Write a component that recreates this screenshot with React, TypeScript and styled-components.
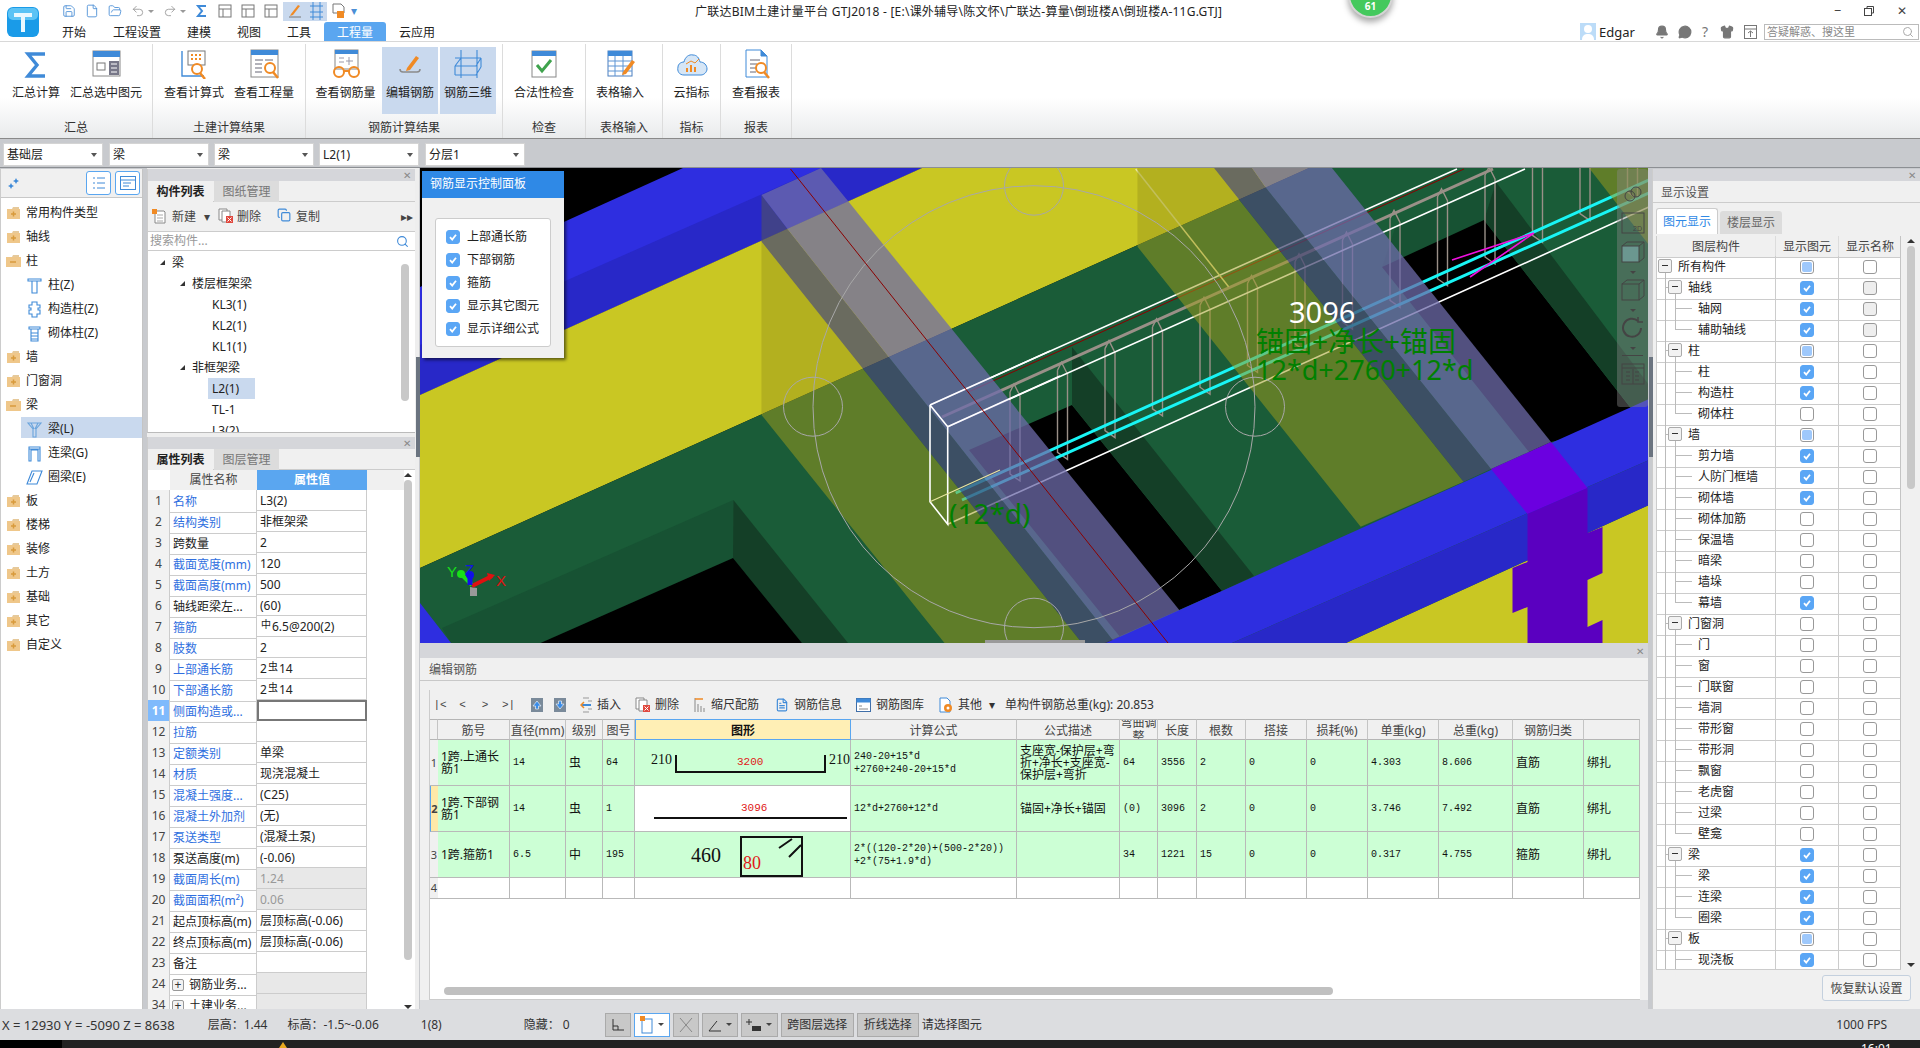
import React from "react";
import styled, { createGlobalStyle } from "styled-components";
import { Save, File, FolderOpen, Undo2, Redo2, Bell, MessageCircle, Shirt, Search, Copy, FileText } from "lucide-react";

const SANS = `"Noto Sans","Noto Sans CJK SC",sans-serif`;
const MONO = `"Liberation Mono","Noto Sans CJK SC",monospace`;

const Global = createGlobalStyle`
  html,body{margin:0;padding:0;background:#c8cace;}
  *{box-sizing:border-box;}
`;

const Page = styled.div`
  width:1920px;height:1048px;overflow:hidden;display:flex;flex-direction:column;position:relative;
  background:#c8cace;font-family:${SANS};font-size:12px;line-height:14px;color:#222;
`;
/* ---------- header ---------- */
const Header = styled.header`
  height:42px;background:#fff;border-bottom:1px solid #d8d8d8;display:grid;
  grid-template-columns:45px 650px 530px 1fr;grid-template-rows:22px 19px;
`;
const LogoCell = styled.div`grid-row:1/3;display:flex;align-items:flex-end;justify-content:center;padding-bottom:4px;`;
const QuickRow = styled.div`display:flex;align-items:center;gap:9px;padding-left:17px;color:#4b8fd6;`;
const QuickHi = styled.div`display:flex;align-items:center;gap:8px;background:#c9d9ee;height:19px;padding:0 4px 0 5px;margin:0 -4px;`;
const MiniCaret = styled.span`width:0;height:0;border-left:3px solid transparent;border-right:3px solid transparent;border-top:3px solid #999;margin-left:-6px;`;
const Title = styled.div`font-size:12px;line-height:23px;white-space:nowrap;color:#222;letter-spacing:.23px;`;
const WinBtns = styled.div`display:flex;justify-content:flex-end;align-items:center;gap:22px;padding-right:13px;color:#444;font-size:12px;`;
const TabsRow = styled.nav`grid-column:2/4;display:flex;align-items:flex-end;padding-left:17px;`;
const Tab = styled.div<{ $on?: boolean; $ml?: number }>`
  height:19px;line-height:21px;padding:0 ${p => (p.$on ? 13 : 0)}px;margin-left:${p => p.$ml ?? 0}px;
  border-radius:${p => (p.$on ? "3px 3px 0 0" : "0")};background:${p => (p.$on ? "#5aa6f0" : "none")};
  color:${p => (p.$on ? "#fff" : "#222")};
`;
const UserRow = styled.div`display:flex;align-items:center;justify-content:flex-end;color:#666;padding-right:1px;height:19px;`;
const UserName = styled.span`margin:0 15px 0 3px;color:#222;font-size:13px;`;
const UserGlyph = styled.span<{ $w: number }>`width:${p => p.$w}px;display:flex;align-items:center;justify-content:center;font-size:14px;color:#777;`;
const HeadSearch = styled.div`
  width:155px;height:16px;border:1px solid #bbb;display:flex;align-items:center;justify-content:space-between;
  padding:0 4px 0 2px;color:#888;font-size:11px;margin-left:4px;
`;
const Badge = styled.div`
  position:absolute;left:1348px;top:-28px;width:45px;height:46px;border-radius:50%;background:#44c95d;
  border:2px solid #d5d5d5;box-shadow:0 4px 6px rgba(0,0,0,.35);color:#fff;font-size:10px;font-weight:700;
  display:flex;align-items:flex-end;justify-content:center;padding-bottom:3px;
`;
/* ---------- ribbon ---------- */
const Ribbon = styled.section`
  height:97px;display:flex;background:linear-gradient(#fff 0,#fff 58%,#e9ebec 100%);border-bottom:1px solid #8a8a8a;
`;
const RGroup = styled.div<{ $w: number }>`
  width:${p => p.$w}px;display:flex;flex-direction:column;margin:2px 0 0;
  border-right:1px solid #dcdcdc;
`;
const RButtons = styled.div<{ $pl?: number; $pr?: number; $center?: boolean }>`
  flex:1;display:flex;gap:0;padding:3px ${p => p.$pr ?? 0}px 0 ${p => p.$pl ?? 0}px;
  justify-content:${p => (p.$center ? "center" : "flex-start")};
`;
const RBtn = styled.div<{ $w: number; $on?: boolean; $ml?: number }>`
  width:${p => p.$w}px;height:67px;margin-left:${p => p.$ml ?? 0}px;background:${p => (p.$on ? "#c9d9ee" : "none")};
  display:flex;flex-direction:column;align-items:center;white-space:nowrap;padding-top:2px;
  svg{height:30px;width:32px;flex:none;}
`;
const RLabel = styled.span`margin-top:7px;line-height:14px;`;
const RGroupName = styled.div`height:20px;line-height:20px;text-align:center;color:#333;`;
/* ---------- combos ---------- */
const ComboBar = styled.div`height:29px;background:#c8cace;display:flex;align-items:flex-start;padding:4px 0 0 3px;border-bottom:1px solid #8c8f93;`;
const Combo = styled.div<{ $ml?: number }>`
  width:100px;height:23px;background:#fff;border:1px solid #d4d4d4;margin-left:${p => p.$ml ?? 0}px;
  display:flex;align-items:center;justify-content:space-between;padding:0 5px 0 3px;
  &::after{content:"";border-left:3px solid transparent;border-right:3px solid transparent;border-top:4px solid #555;}
`;
/* ---------- main ---------- */
const Main = styled.main`height:841px;display:flex;position:relative;`;
const SideHandle = styled.div<{ $x: number }>`position:absolute;left:${p => p.$x}px;top:189px;width:4px;height:100px;background:#6b7480;`;
const LeftNav = styled.aside`width:143px;background:#fff;border-right:1px solid #c4c4c4;border-left:1px solid #ccc;display:flex;flex-direction:column;margin-top:1px;`;
const NavHead = styled.div`height:29px;background:#f0f0f0;border-bottom:1px solid #c8c8c8;display:flex;align-items:center;padding:0 2px 0 6px;gap:4px;margin-bottom:2px;`;
const NavHeadBtn = styled.div`width:25px;height:24px;border:1px solid #5aa6f0;border-radius:3px;background:#fff;display:flex;align-items:center;justify-content:center;`;
const Spacer = styled.div`flex:1;`;
const NavRow = styled.div<{ $sub?: boolean; $on?: boolean }>`
  height:24px;display:flex;align-items:center;gap:5px;white-space:nowrap;padding:2px 0 0 5px;
  margin-left:${p => (p.$sub ? 20 : 0)}px;
  background:${p => (p.$on ? "linear-gradient(transparent 1px,#c9d9ee 1px,#c9d9ee 22px,transparent 22px)" : "none")};
  svg{flex:none;}
`;
const Col2 = styled.div`width:272px;margin-left:4px;padding-right:4px;display:flex;flex-direction:column;gap:4px;padding-top:1px;background:#eee;`;
const ListPanel = styled.section`height:264px;background:#fff;display:flex;flex-direction:column;border-bottom:1px solid #bbb;border-left:1px solid #ccc;overflow:hidden;`;
const PropPanel = styled.section`height:572px;background:#fff;display:flex;flex-direction:column;border-left:1px solid #ccc;overflow:hidden;`;
const Strip = styled.div`
  height:12px;flex:none;background:#d5d6da;display:flex;justify-content:flex-end;align-items:center;padding-right:4px;
  color:#888;font-size:10px;line-height:12px;
`;
const Tabs2 = styled.div`height:21px;flex:none;background:#f0f0f0;display:flex;border-bottom:1px solid #ccc;`;
const Tab2 = styled.div<{ $on?: boolean }>`
  width:65px;text-align:center;line-height:22px;height:21px;margin-right:1px;
  background:${p => (p.$on ? "#f0f0f0" : "#dcdcdc")};color:${p => (p.$on ? "#222" : "#777")};font-weight:${p => (p.$on ? 700 : 400)};
`;
const ListTools = styled.div`height:30px;flex:none;background:#f0f0f0;border-bottom:1px solid #ccc;display:flex;align-items:center;padding-left:4px;color:#444;`;
const ToolText = styled.span<{ $ml?: number; $mr?: number }>`margin-left:${p => p.$ml ?? 0}px;margin-right:${p => p.$mr ?? 0}px;white-space:nowrap;`;
const SearchRow = styled.div`height:19px;flex:none;border-bottom:1px solid #ccc;display:flex;align-items:center;justify-content:space-between;padding:0 6px 0 2px;color:#999;`;
const TreeArea = styled.div`flex:1;display:flex;overflow:hidden;position:relative;`;
const TreeList = styled.div`flex:1;overflow:hidden;padding-top:1px;`;
const TreeRow = styled.div<{ $indent: number }>`
  height:21px;display:flex;align-items:center;padding-left:${p => p.$indent}px;white-space:nowrap;
`;
const Caret = styled.span`width:0;height:0;border-left:5px solid transparent;border-bottom:5px solid #333;margin-right:7px;margin-left:-12px;`;
const TreeSel = styled.span`background:#c9d9ee;height:21px;width:47px;line-height:21px;padding-left:4px;margin-left:-4px;`;
const VScroll = styled.div<{ $h: number; $top?: number; $mr?: number }>`
  width:8px;height:${p => p.$h}px;background:#c8c8c8;border-radius:4px;margin:${p => p.$top ?? 0}px ${p => p.$mr ?? 6}px 0 0;flex:none;
`;
const PropBody = styled.div`flex:1;display:flex;overflow:hidden;`;
const PropTable = styled.div`width:256px;flex:none;`;
const PropRow = styled.div`display:grid;grid-template-columns:22px 87px 110px;height:21px;`;
const PropHeadRow = styled.div`display:grid;grid-template-columns:22px 87px 110px 37px;height:20px;`;
const PH = styled.div<{ $on?: boolean; $blank?: boolean }>`
  text-align:center;line-height:20px;background:${p => (p.$blank ? "#fff" : p.$on ? "#5aa6f0" : "#f0f0f0")};
  color:${p => (p.$on ? "#fff" : "#444")};font-weight:${p => (p.$on ? 700 : 400)};
`;
const PNum = styled.div<{ $on?: boolean }>`
  background:${p => (p.$on ? "#7fbafc" : "#f2f2f2")};color:${p => (p.$on ? "#fff" : "#444")};font-weight:${p => (p.$on ? 700 : 400)};
  text-align:center;line-height:22px;border-bottom:1px solid #ccc;border-right:1px solid #ccc;
`;
const PName = styled.div<{ $blue?: boolean }>`
  color:${p => (p.$blue ? "#2f6fe0" : "#222")};padding:2px 0 0 3px;white-space:nowrap;overflow:hidden;
  border-bottom:1px solid #ccc;border-right:1px solid #ccc;display:flex;align-items:center;gap:5px;
`;
const PVal = styled.div<{ $gray?: boolean; $sel?: boolean }>`
  background:${p => (p.$gray ? "#e8e8e8" : "#fff")};color:${p => (p.$gray ? "#999" : "#222")};padding-left:3px;line-height:22px;height:21px;
  white-space:nowrap;border-bottom:1px solid #ccc;border-right:1px solid #ccc;overflow:hidden;
  ${p => (p.$sel ? "outline:2px solid #777;outline-offset:-2px;" : "")}
`;
const Plus = styled.span`width:12px;height:12px;border:1px solid #999;border-radius:2px;background:#f2f2f2;text-align:center;line-height:10px;margin-left:-1px;color:#333;flex:none;`;
const Rebar = styled.sup`font-size:10px;line-height:8px;vertical-align:3px;margin:0 1px;`;
const ArrowCol = styled.div`flex:none;width:8px;display:flex;flex-direction:column;align-items:center;padding:3px 0 0 0;`;
const UpArrow = styled.span`width:0;height:0;border-left:4px solid transparent;border-right:4px solid transparent;border-bottom:4px solid #333;margin-bottom:3px;`;
const DownArrow = styled.span`width:0;height:0;border-left:4px solid transparent;border-right:4px solid transparent;border-top:4px solid #333;`;
/* ---------- center ---------- */
const Center = styled.div`width:1229px;margin-left:0;display:flex;flex-direction:column;border-left:1px solid #c8cace;`;
const Viewport = styled.div`height:475px;flex:none;position:relative;overflow:hidden;background:#000;`;
const VSvg = styled.svg`display:block;width:1229px;height:475px;`;
const CtlPanel = styled.div`position:absolute;left:2px;top:3px;width:142px;height:187px;background:#f0f0f0;box-shadow:2px 2px 3px rgba(0,0,0,.55);display:flex;flex-direction:column;`;
const CtlHead = styled.div`height:27px;background:#2f89e6;color:#fff;line-height:26px;padding-left:8px;`;
const CtlBox = styled.div`margin:20px 13px 0 13px;height:129px;background:#fff;border:1px solid #ccc;border-radius:3px;display:flex;flex-direction:column;gap:9px;padding:11px 0 0 10px;`;
const CtlRow = styled.div`display:flex;align-items:center;gap:7px;height:14px;white-space:nowrap;`;
const ViewTools = styled.div`
  position:absolute;right:0;top:1px;width:31px;height:238px;background:rgba(135,135,135,.42);border-radius:3px;
  display:flex;flex-direction:column;align-items:center;padding-top:14px;gap:7px;
`;
const ToolCaret = styled.span`width:0;height:0;border-left:3px solid transparent;border-right:3px solid transparent;border-top:3px solid #444;margin:1px 0 -2px;`;
const ToolRule = styled.span`width:21px;height:1px;background:#444;`;
const HHandle = styled.div`position:absolute;left:565px;bottom:0;width:100px;height:3px;background:#9a9a9a;`;

const BottomPanel = styled.section`height:366px;flex:none;display:flex;flex-direction:column;background:#dcdde0;`;
const BStrip = styled(Strip)`height:15px;margin-top:0;`;
const BTitle = styled.div`height:23px;flex:none;background:#f0f0f0;line-height:24px;padding-left:9px;color:#555;border-bottom:1px solid #c8c8c8;`;
const BBody = styled.div`height:319px;flex:none;background:#f0f0f0;padding-left:9px;display:flex;flex-direction:column;`;
const BInner = styled.div`width:1211px;flex:1;display:flex;flex-direction:column;background:#fff;border-left:1px solid #ccc;margin-top:9px;border-bottom:1px solid #ccc;`;
const BTools = styled.div`height:29px;flex:none;background:#f0f0f0;display:flex;align-items:center;color:#333;white-space:nowrap;`;
const Nav = styled.span<{ $w: number }>`width:${p => p.$w}px;text-align:center;color:#444;font-family:"Liberation Mono",monospace;font-size:11px;`;
const IconSlot = styled.span<{ $ml: number }>`margin-left:${p => p.$ml}px;display:inline-flex;flex:none;margin-right:5px;`;
const GridRow = styled.div<{ $h: number; $bg?: string }>`
  display:grid;height:${p => p.$h}px;flex:none;background:${p => p.$bg ?? "none"};
  grid-template-columns:8px 72px 56px 37px 32px 216px 166px 103px 38px 39px 49px 61px 61px 71px 74px 71px 1fr;
`;
const HeadCell = styled.div<{ $on?: boolean }>`
  background:${p => (p.$on ? "#ffefb5" : "#f0f0f0")};text-align:center;overflow:hidden;color:#444;
  line-height:21px;white-space:nowrap;font-weight:${p => (p.$on ? 700 : 400)};
  border-right:1px solid #c4c4c4;border-bottom:1px solid #b5b5b5;border-top:1px solid #b5b5b5;
  ${p => (p.$on ? "color:#111;border:1px solid #5aa6f0;" : "")}
`;
const WrapHead = styled(HeadCell)`white-space:normal;line-height:14px;margin:0;padding-top:0;font-size:12px;display:flex;align-items:center;justify-content:center;`;
const Cell = styled.div<{ $mono?: boolean; $white?: boolean }>`
  border-right:1px solid #b9b9b9;border-bottom:1px solid #b9b9b9;display:flex;align-items:center;padding-left:3px;overflow:hidden;color:#111;
  font-family:${p => (p.$mono ? MONO : SANS)};font-size:${p => (p.$mono ? 10 : 12)}px;line-height:${p => (p.$mono ? 13 : 12)}px;
  background:${p => (p.$white ? "#fff" : "transparent")};
`;
const RowNum = styled.div<{ $on?: boolean }>`
  background:${p => (p.$on ? "#ffe9a8" : "#f0f0f0")};font-size:11px;font-weight:${p => (p.$on ? 700 : 400)};color:#444;
  display:flex;align-items:center;justify-content:center;border-bottom:1px solid #b9b9b9;
  ${p => (p.$on ? "border-left:1px solid #5aa6f0;" : "")}
`;
const ShapeSvg = styled.svg`display:block;width:216px;height:46px;flex:none;margin-left:-3px;`;
const BRest = styled.div`flex:1;display:flex;align-items:flex-end;padding:0 0 4px 14px;`;
const HScroll = styled.div`width:889px;height:8px;background:#c0c0c0;border-radius:4px;`;
/* ---------- right ---------- */
const RightWrap = styled.div`flex:1;display:flex;flex-direction:column;margin-left:4px;background:#f0f0f0;border-left:1px solid #ccc;margin-top:1px;`;
const RTitle = styled.div`height:22px;flex:none;line-height:23px;padding-left:8px;color:#555;background:#f0f0f0;border-bottom:1px solid #ccc;`;
const RTabs = styled.div`height:33px;flex:none;display:flex;align-items:flex-end;padding:0 0 2px 3px;gap:2px;`;
const RTab = styled.div<{ $on?: boolean }>`
  width:62px;height:${p => (p.$on ? 26 : 23)}px;text-align:center;line-height:${p => (p.$on ? 26 : 23)}px;
  border-radius:3px 3px 0 0;background:${p => (p.$on ? "#fff" : "#dcdcdc")};color:${p => (p.$on ? "#2f89e6" : "#666")};
  ${p => (p.$on ? "border:1px solid #ccc;border-bottom:none;" : "")}
`;
const RTableWrap = styled.div`height:734px;flex:none;display:flex;padding-left:3px;`;
const RTable = styled.div`width:245px;flex:none;background:#fff;border:1px solid #ccc;border-right:1px solid #c4c4c4;border-top:none;overflow:hidden;`;
const RGridRow = styled.div<{ $h: number }>`display:grid;grid-template-columns:119px 63px 63px;height:${p => p.$h}px;`;
const RHead = styled.div`background:#f0f0f0;text-align:center;line-height:21px;color:#444;border-right:1px solid #dcdcdc;border-bottom:1px solid #ccc;`;
const RName = styled.div<{ $lv: number }>`
  position:relative;padding-left:${p => [21, 31, 41][p.$lv]}px;line-height:22px;border-bottom:1px solid #ccc;border-right:1px solid #ccc;white-space:nowrap;
`;
const RCheck = styled.div`display:flex;align-items:center;justify-content:center;border-bottom:1px solid #ccc;border-right:1px solid #ccc;`;
const Minus = styled.span<{ $lv: number }>`
  position:absolute;left:${p => (p.$lv === 0 ? 1 : 11)}px;top:3px;width:14px;height:14px;border:1px solid #aaa;border-radius:2px;background:#f2f2f2;z-index:1;
  &::after{content:"";position:absolute;left:3px;right:3px;top:5px;height:1px;background:#333;}
`;
const GuideV = styled.span<{ $x: number; $top?: number; $h?: number }>`
  position:absolute;left:${p => p.$x}px;top:${p => p.$top ?? 0}px;height:${p => p.$h ?? 21}px;width:1px;background:#bbb;
`;
const GuideH = styled.span<{ $x: number; $w: number }>`
  position:absolute;left:${p => p.$x}px;top:10px;width:${p => p.$w}px;height:1px;background:#bbb;
`;
const Box = styled.span<{ $k: string }>`
  width:14px;height:14px;border-radius:3px;display:inline-flex;align-items:center;justify-content:center;flex:none;
  background:${p => (p.$k === "c" ? "#5aa6f5" : p.$k === "d" ? "#eee" : "#fff")};
  border:1px solid ${p => (p.$k === "c" ? "#5aa6f5" : "#999")};
  ${p => (p.$k === "p" ? "&::after{content:'';width:10px;height:10px;background:#9ec8fb;border-radius:2px;}" : "")}
`;
const RScroll = styled.div`width:18px;flex:none;display:flex;flex-direction:column;align-items:center;padding:3px 0 3px 2px;justify-content:flex-start;`;
const RFoot = styled.div`flex:1;display:flex;justify-content:flex-end;padding:5px 9px 0 0;`;
const ResetBtn = styled.div`width:89px;height:26px;border:1px solid #c4d0de;border-radius:3px;background:#f4f4f4;text-align:center;line-height:25px;color:#444;`;
/* ---------- status ---------- */
const Status = styled.footer`height:31px;flex:none;background:#dcdde0;display:flex;align-items:center;color:#333;white-space:nowrap;padding-left:2px;`;
const SText = styled.span<{ $ml?: number; $big?: boolean }>`margin-left:${p => p.$ml ?? 0}px;font-size:${p => (p.$big ? 13 : 12)}px;`;
const SBtn = styled.div<{ $w: number; $on?: boolean; $ml?: number }>`
  width:${p => p.$w}px;height:24px;background:${p => (p.$on ? "#fff" : "#c8c8c8")};border:1px solid ${p => (p.$on ? "#5aa6f0" : "#aaa")};
  margin-left:${p => p.$ml ?? 3}px;display:flex;align-items:center;justify-content:center;gap:4px;
`;
const SCaret = styled.span`width:0;height:0;border-left:3px solid transparent;border-right:3px solid transparent;border-top:3px solid #444;`;
const TaskBar = styled.div`height:8px;flex:none;background:linear-gradient(90deg,#000 62px,#222 62px);display:flex;overflow:hidden;position:relative;`;
const TaskMark = styled.span`margin:2px 0 0 279px;width:0;height:0;border-left:4px solid transparent;border-right:4px solid transparent;border-bottom:6px solid #e8a820;`;
const Clock = styled.span`margin:3px 0 0 1574px;color:#fff;font-size:12px;line-height:12px;`;

/* ---------- icons ---------- */
const B = "#3f8ad8", O = "#f08a24";
const Check = () => (
  <svg width="10" height="10" viewBox="0 0 10 10"><path d="M2 5.2 4.2 7.6 8 2.8" fill="none" stroke="#fff" strokeWidth="1.8" /></svg>
);
const Logo = () => (
  <svg width="32" height="30" viewBox="0 0 32 30">
    <rect width="32" height="30" rx="6" fill="#1a9be8" />
    <rect x="1" y="1" width="30" height="12" rx="5" fill="#5cc3f5" />
    <path d="M7 6h18v4h-7v15h-4V10H7z" fill="#eaf8ff" />
  </svg>
);
const Ribbon1 = () => (<svg viewBox="0 0 32 30"><path d="M25 5H8l9 11-9 11h17" fill="none" stroke={B} strokeWidth="3.4" /></svg>);
const Ribbon2 = () => (<svg viewBox="0 0 32 30"><rect x="3" y="2" width="27" height="25" fill="#fff" stroke="#888" /><rect x="3" y="2" width="27" height="6" fill={B} /><rect x="7" y="14" width="8" height="7" fill="none" stroke="#777" /><rect x="19" y="12" width="10" height="14" fill="#778" /><path d="M21 15h6M21 19h6M21 23h6" stroke="#fff" /></svg>);
const Mag = ({ x = 20, y = 20 }: { x?: number; y?: number }) => (<g><circle cx={x} cy={y} r="5" fill="#fff" stroke={O} strokeWidth="2" /><path d={`M${x + 3} ${y + 4}l5 6`} stroke={O} strokeWidth="2.5" /></g>);
const Ribbon3 = () => (<svg viewBox="0 0 32 30"><path d="M4 2v25h22" fill="none" stroke={B} strokeWidth="1.4" /><rect x="10" y="2" width="17" height="14" fill="#fff" stroke="#777" /><path d="M13 6h2M17 6h2M21 6h2M13 10h2M17 10h2M21 10h2" stroke={O} strokeWidth="2" /><Mag x={19} y={20} /></svg>);
const Ribbon4 = () => (<svg viewBox="0 0 32 30"><rect x="3" y="1" width="27" height="27" fill="#fff" stroke="#888" /><rect x="3" y="1" width="27" height="5" fill={B} /><path d="M7 11h8M17 11h8M7 15h7M7 19h7M7 23h7" stroke="#667" /><Mag x={22} y={19} /></svg>);
const Ribbon5 = () => (<svg viewBox="0 0 32 30"><rect x="5" y="1" width="23" height="19" fill="#fff" stroke="#888" /><rect x="5" y="1" width="23" height="4" fill={B} /><path d="M9 9h5M9 13h5M19 8v8M16 12h7" stroke="#99a" /><circle cx="9" cy="23" r="5" fill="none" stroke={O} strokeWidth="2" /><circle cx="24" cy="23" r="5" fill="none" stroke={O} strokeWidth="2" /><path d="M14 22h5" stroke={O} strokeWidth="2" /></svg>);
const Ribbon6 = () => (<svg viewBox="0 0 32 30"><path d="M6 20c0 3 2 3 3 3h14c2 0 3-1 3-3" fill="none" stroke="#8a8a8a" strokeWidth="1.5" /><path d="M13 19l9-12 3 2-9 12-4 1z" fill={O} /></svg>);
const Ribbon7 = () => (<svg viewBox="0 0 32 30" fill="none" stroke={B} strokeWidth="1.1"><path d="M9 1v28M25 1v28M3 9h26M3 17h21l5-8M3 26h21l5-8M3 17l6-8M3 17v9M29 9v9" /></svg>);
const Ribbon8 = () => (<svg viewBox="0 0 32 30"><rect x="4" y="2" width="24" height="26" fill="#fff" stroke="#888" /><rect x="4" y="2" width="24" height="5" fill={B} /><path d="M9 16l5 6 9-11" fill="none" stroke="#3fa34d" strokeWidth="3" /></svg>);
const Ribbon9 = () => (<svg viewBox="0 0 32 30"><rect x="4" y="2" width="24" height="25" fill="#fff" stroke="#4a7fc0" /><rect x="4" y="2" width="24" height="5" fill={B} /><path d="M4 12h24M4 17h24M4 22h24M11 7v20M19 7v20" stroke="#5c94d4" /><path d="M19 23l9-12 3 2-9 12-4 1z" fill={O} /></svg>);
const Ribbon10 = () => (<svg viewBox="0 0 32 30"><path d="M8 26c-5 0-7-4-6-8 0-3 3-5 6-5 1-5 5-8 9-7 4 0 6 3 7 7 4 0 7 3 7 7 0 3-3 6-6 6z" fill="#d6e6f6" stroke={B} /><path d="M11 23v-4M15 23v-7M19 23v-5" stroke={O} strokeWidth="2" /><path d="M10 15l5-3 4 2 4-4" fill="none" stroke={O} /></svg>);
const Ribbon11 = () => (<svg viewBox="0 0 32 30"><path d="M6 1h15l6 6v21H6z" fill="#fff" stroke={B} /><path d="M21 1v6h6" fill={B} stroke={B} /><path d="M10 11h10M10 15h7M10 19h6M10 23h6" stroke="#667" /><Mag x={21} y={19} /></svg>);
const Folder = ({ open }: { open?: boolean }) => (
  <svg width="15" height="14" viewBox="0 0 15 14">
    <path d="M1 3h5l1-2h6v2H1z" fill="#e6c99a" />
    <rect x={open ? 0 : 1} y="3" width={open ? 15 : 13} height="10" fill="#efc78a" />
    <path d={open ? "M4 8h6" : "M5 8h5M7.5 5.500v5"} stroke="#d89a3c" strokeWidth="1.5" />
  </svg>
);
const NavIco = ({ k, on }: { k: string; on?: boolean }) => {
  const c = on ? "#6aa4dc" : B;
  return (
    <svg width="17" height="17" viewBox="0 0 17 17" fill="none" stroke={c} strokeWidth="1.1">
      {k === "t" && <path d="M2 2h13v2H2zM6 4v12h5V4" />}
      {k === "g" && <path d="M6 1h5v3h3v3h-2v2h2v4h-3v3H6v-3H3V9h2V7H3V4h3z" />}
      {k === "b" && <path d="M3 2h11v2H3zM5 4v12h7V4M5 8h7M5 11h7M5 14h7" />}
      {k === "y" && <path d="M2 2h13l-5 6v8H7V8zM5 2l3 6M12 2l-3 6" />}
      {k === "l" && <path d="M3 2h11v14h-2V5H5v11H3zM3 4h11" />}
      {k === "q" && <path d="M6 2h10l-5 13H1zM8 4l-4 9" />}
    </svg>
  );
};
const SmallGrid = () => (<svg width="14" height="14" viewBox="0 0 14 14" fill="none" stroke="#777"><rect x="1" y="1" width="12" height="12" /><path d="M1 5h12M5 5v8" /></svg>);
const MiniGrid = () => (<svg width="13" height="18" viewBox="0 0 13 18" fill="none" stroke={B}><path d="M3 0v18M10 0v18M0 4h13M0 10h13M0 15h13" /></svg>);
const NewDoc = () => (<svg width="15" height="15" viewBox="0 0 15 15"><path d="M3 2h9l1 1v11H3z" fill="#fff" stroke="#888" /><path d="M5 6h6M5 9h6M5 12h6" stroke="#aaa" /><path d="M0 0h5v5H0z" fill={O} /></svg>);
const DelDoc = () => (<svg width="15" height="15" viewBox="0 0 15 15"><path d="M1 1h8v11H1z" fill="#fff" stroke="#888" /><path d="M4 3h8v11H4z" fill="#fff" stroke="#888" /><rect x="8" y="8" width="7" height="7" fill="#e0483e" /><path d="M9.500 9.500l4 4m0-4l-4 4" stroke="#fff" /></svg>);
const UpBox = ({ d }: { d?: boolean }) => (<svg width="12" height="14" viewBox="0 0 12 14"><rect width="12" height="14" fill="#7a8a9a" /><path d={d ? "M6 11 2 6h2.500V3h3v3H10z" : "M6 3l4 5H7.500v3h-3V8H2z"} fill="#3a8ce8" stroke="#fff" strokeWidth=".6" /></svg>);
const Ins = () => (<svg width="12" height="16" viewBox="0 0 12 16" fill="none"><path d="M3 1h6M3 15h6M8 4h4M8 12h4" stroke="#999" /><path d="M1 8h10" stroke={B} strokeWidth="2" /><path d="M4 5 1 8l3 3" stroke={O} strokeWidth="1.5" /></svg>);
const Scale = () => (<svg width="12" height="16" viewBox="0 0 12 16" fill="none" stroke="#888"><path d="M1 1v14M4 7v8M7 9v6M10 11v4" /><path d="M1 2h8" stroke={O} strokeWidth="1.500" /></svg>);
const ImgLib = () => (<svg width="15" height="14" viewBox="0 0 15 14"><rect x=".5" y=".5" width="14" height="13" fill="#fff" stroke="#3f6ea8" /><rect x=".5" y=".5" width="14" height="4" fill={B} /><path d="M3 8h3M3 11h9" stroke="#888" /></svg>);
const Other = () => (<svg width="15" height="16" viewBox="0 0 15 16"><path d="M2 1h7l3 3v11H2z" fill="#fff" stroke={B} /><circle cx="10" cy="11" r="4" fill={O} /><circle cx="10" cy="11" r="1.500" fill="#fff" /></svg>);

const Stirrups = () => (
  <g fill="none" stroke="#9a9088" strokeWidth="1.4">
    {Array.from({ length: 14 }, (_, i) => {
      const x = 1010 + i * 47.5, y = 384 - i * 21.7;
      return <path key={i} d={`M${x} ${y + 8}V${y + 90}L${x + 10} ${y + 97}V${y + 12}L${x + 4} ${y}L${x} ${y + 8}`} />;
    })}
  </g>
);
const polys: [string, string][] = [
  ["683,168 922,168 420,395 420,287", "#2e2ee0"],
  ["821,168 922,168 420,395 420,345", "#2828c8"],
  ["922,168 1309,168 420,568 420,395", "#c9c723"],
  ["1309,168 1649,168 1649,643 420,643 420,568", "#1a5c38"],
  ["733.400,500 442,628 451,643 540.500,643 733,558", "#175233"],
  ["733.400,500 733,558 802,643 848,643", "#143f27"],
  ["733,558 540.500,643 802,643", "#000"],
  ["420,603 451,643 420,643", "#2e2ee0"],
  ["969,450 1072,405 1222,591 1100,645 1125,643", "#000"],
  ["1072,347 1072,405 1222,591 1254,576", "#143f27"],
  ["1382,267 1484,220 1496,182 1395,228", "#175233"],
  ["1382,267 1484,220 1640,420 1551,442 1529,452", "#000"],
  ["1484,220 1496,182 1649,385 1649,407 1630,407", "#143f27"],
];
const F1 = "rgba(159,155,29,.52)", F2 = "rgba(73,74,116,.74)", F3 = "rgba(110,107,170,.75)";
const overlays: [string, string][] = [
  ["761.500,241.700 761.500,415 944.500,643 1082,643", F1],
  ["761.500,195 788.300,230 1115,643 1082,643 761.500,241.700", F2],
  ["761.500,195 821,168 848.600,201.700 1206,643 1115,643 788.300,230", F3],
  ["1137.500,168 1137.500,246.700 1360.700,526.700 1463.600,481.700 1239.300,200 1214,168", F1],
  ["1214,168 1252,168 1266,188 1491,469 1463.600,481.700", F2],
  ["1252,168 1332,168 1551,442 1491,469 1266,188", F3],
  ["1589,168 1649,168 1649,245", F1],
];
const front: [string, string][] = [
  ["1346,643 1649,505 1649,643", "#c9c723"],
  ["1106,643 1649,399 1649,460 1232,643", "#2e2ee0"],
  ["1232,643 1649,460 1649,505 1346,643", "#2828c8"],
  ["1491,469 1551,442 1587.500,488 1527.500,514", "#6b00e0"],
  ["1527.500,514 1587.500,488 1587.500,533 1602.500,527 1602.500,573 1587.500,580 1587.500,627 1602.500,620 1602.500,643 1527.500,643 1527.500,607 1512.500,613 1512.500,568 1527.500,562", "#5a00c0"],
];
const Scene = () => (
  <VSvg viewBox="420 168 1229 475">
    <rect x="420" y="168" width="1229" height="475" fill="#000" />
    {polys.map(([p, f], i) => <polygon key={i} points={p} fill={f} />)}
    <Stirrups />
    <path d="M942 417 1493 169" stroke="#9a9088" strokeWidth="3" />
    <path d="M955.700 493 1649 180M962 500 1649 193" stroke="#19f5f5" strokeWidth="3" />
    <path d="M947.700 426.700 1525 169M930 405 1457 169M947.700 524.300 1649 207" stroke="#fff" strokeWidth="1.600" fill="none" />
    <path d="M969 391.700 1464 169" stroke="#8b0000" />
    <path d="M1452 260 1534 233M1470 277 1534 233" stroke="#f010e0" strokeWidth="1.600" />
    <path d="M1135.700 169 1228.600 286.700" stroke="#e8e6a0" strokeWidth="1.500" />
    {overlays.map(([p, f], i) => <polygon key={i} points={p} fill={f} />)}
    <path d="M947.700 426.700 1060 376M930 405 1050 351M930 405V501.700L947.700 524.300V426.700L930 405" stroke="#fff" strokeWidth="1.600" fill="none" />
    <path d="M930 501.700 1000 470" stroke="#e8e6a0" strokeWidth="1.200" />
    {front.map(([p, f], i) => <polygon key={i} points={p} fill={f} />)}
    <g fill="none" stroke="#a8a8a8" strokeWidth="1">
      <circle cx="1034" cy="406.700" r="221" />
      <circle cx="813" cy="406.700" r="29.500" />
      <circle cx="1034" cy="185.700" r="29.500" />
      <circle cx="1034" cy="627.700" r="29.500" />
      <circle cx="1255" cy="406.700" r="29.500" />
    </g>
    <path d="M790.500 169 1168 643" stroke="#8b0000" />
    <text x="1289" y="323" fill="#fff" fontFamily="Noto Sans" fontSize="29">3096</text>
    <text x="1256" y="352" fill="#008000" fontFamily="Noto Sans,Noto Sans CJK SC" fontSize="28">锚固+净长+锚固</text>
    <text x="1256" y="380" fill="#008000" fontFamily="Noto Sans" fontSize="27">12*d+2760+12*d</text>
    <text x="949" y="524" fill="#008000" fontFamily="Noto Sans" fontSize="28">(12*d)</text>
    <g>
      <path d="M470 587v9h7v-8z" fill="#999" />
      <path d="M472 585 460 573" stroke="#18e018" strokeWidth="4" />
      <path d="M472 586 492 576" stroke="#e01010" strokeWidth="4" />
      <path d="M487 573l8 2-6 6z" fill="#e01010" />
      <path d="M470 585V573" stroke="#1010e8" strokeWidth="5" />
      <circle cx="470" cy="575" r="4" fill="#1010e8" />
      <circle cx="461" cy="574" r="4" fill="#18e018" />
      <text x="447" y="577" fill="#18e018" fontFamily="Liberation Sans" fontSize="15">Y</text>
      <text x="465" y="575" fill="#1010e8" fontFamily="Liberation Sans" fontSize="15">Z</text>
      <text x="496" y="586" fill="#e01010" fontFamily="Liberation Sans" fontSize="15">X</text>
    </g>
  </VSvg>
);
const TI = ({ children, h = 22 }: { children: React.ReactNode; h?: number }) => (
  <svg width="24" height={h} viewBox={`0 0 24 ${h}`} fill="none" stroke="#444" strokeWidth="1">{children}</svg>
);

/* ---------- data ---------- */
const navRows: { t: string; sub?: boolean; icon?: string; open?: boolean; on?: boolean }[] = [
  { t: "常用构件类型" }, { t: "轴线" }, { t: "柱", open: true },
  { t: "柱(Z)", sub: true, icon: "t" }, { t: "构造柱(Z)", sub: true, icon: "g" }, { t: "砌体柱(Z)", sub: true, icon: "b" },
  { t: "墙" }, { t: "门窗洞" }, { t: "梁", open: true },
  { t: "梁(L)", sub: true, icon: "y", on: true }, { t: "连梁(G)", sub: true, icon: "l" }, { t: "圈梁(E)", sub: true, icon: "q" },
  { t: "板" }, { t: "楼梯" }, { t: "装修" }, { t: "土方" }, { t: "基础" }, { t: "其它" }, { t: "自定义" },
];
const R1 = <>2<Rebar>虫</Rebar>14</>;
const propRows: { n: string; name: string; v?: React.ReactNode; blue?: boolean; gray?: boolean; sel?: boolean; plus?: boolean }[] = [
  { n: "1", name: "名称", v: "L3(2)", blue: true },
  { n: "2", name: "结构类别", v: "非框架梁", blue: true },
  { n: "3", name: "跨数量", v: "2" },
  { n: "4", name: "截面宽度(mm)", v: "120", blue: true },
  { n: "5", name: "截面高度(mm)", v: "500", blue: true },
  { n: "6", name: "轴线距梁左...", v: "(60)" },
  { n: "7", name: "箍筋", v: <><Rebar>中</Rebar>6.5@200(2)</>, blue: true },
  { n: "8", name: "肢数", v: "2", blue: true },
  { n: "9", name: "上部通长筋", v: R1, blue: true },
  { n: "10", name: "下部通长筋", v: R1, blue: true },
  { n: "11", name: "侧面构造或...", blue: true, sel: true },
  { n: "12", name: "拉筋", blue: true },
  { n: "13", name: "定额类别", v: "单梁", blue: true },
  { n: "14", name: "材质", v: "现浇混凝土", blue: true },
  { n: "15", name: "混凝土强度...", v: "(C25)", blue: true },
  { n: "16", name: "混凝土外加剂", v: "(无)", blue: true },
  { n: "17", name: "泵送类型", v: "(混凝土泵)", blue: true },
  { n: "18", name: "泵送高度(m)", v: "(-0.06)" },
  { n: "19", name: "截面周长(m)", v: "1.24", blue: true, gray: true },
  { n: "20", name: "截面面积(m²)", v: "0.06", blue: true, gray: true },
  { n: "21", name: "起点顶标高(m)", v: "层顶标高(-0.06)" },
  { n: "22", name: "终点顶标高(m)", v: "层顶标高(-0.06)" },
  { n: "23", name: "备注" },
  { n: "24", name: "钢筋业务...", gray: true, plus: true },
  { n: "34", name: "土建业务...", gray: true, plus: true },
];
type RR = [string, number, string, string, boolean?];
const rightRows: RR[] = [
  ["所有构件", 0, "p", "e"], ["轴线", 1, "c", "d"], ["轴网", 2, "c", "d"], ["辅助轴线", 2, "c", "d", true],
  ["柱", 1, "p", "e"], ["柱", 2, "c", "e"], ["构造柱", 2, "c", "e"], ["砌体柱", 2, "e", "e", true],
  ["墙", 1, "p", "e"], ["剪力墙", 2, "c", "e"], ["人防门框墙", 2, "c", "e"], ["砌体墙", 2, "c", "e"], ["砌体加筋", 2, "e", "e"],
  ["保温墙", 2, "e", "e"], ["暗梁", 2, "e", "e"], ["墙垛", 2, "e", "e"], ["幕墙", 2, "c", "e", true],
  ["门窗洞", 1, "e", "e"], ["门", 2, "e", "e"], ["窗", 2, "e", "e"], ["门联窗", 2, "e", "e"], ["墙洞", 2, "e", "e"], ["带形窗", 2, "e", "e"],
  ["带形洞", 2, "e", "e"], ["飘窗", 2, "e", "e"], ["老虎窗", 2, "e", "e"], ["过梁", 2, "e", "e"], ["壁龛", 2, "e", "e", true],
  ["梁", 1, "c", "e"], ["梁", 2, "c", "e"], ["连梁", 2, "c", "e"], ["圈梁", 2, "c", "e", true],
  ["板", 1, "p", "e"], ["现浇板", 2, "c", "e"],
];
const heads = ["", "筋号", "直径(mm)", "级别", "图号", "图形", "计算公式", "公式描述", "弯曲调整", "长度", "根数", "搭接", "损耗(%)", "单重(kg)", "总重(kg)", "钢筋归类", ""];
const shapeText = { fontFamily: "Liberation Serif", fill: "#111" };
const Shape1 = () => (
  <ShapeSvg viewBox="0 0 216 46">
    <text x="16" y="24" fontSize="14" {...shapeText}>210</text>
    <path d="M41 15V32H190V15" fill="none" stroke="#111" strokeWidth="2" />
    <text x="102" y="25" fontSize="11" fill="#e01818" fontFamily="Liberation Mono">3200</text>
    <text x="194" y="24" fontSize="14" {...shapeText}>210</text>
  </ShapeSvg>
);
const Shape2 = () => (
  <ShapeSvg viewBox="0 0 216 46">
    <text x="106" y="25" fontSize="11" fill="#e01818" fontFamily="Liberation Mono">3096</text>
    <path d="M19 32H212" stroke="#111" strokeWidth="2" />
  </ShapeSvg>
);
const Shape3 = () => (
  <ShapeSvg viewBox="0 0 216 46">
    <text x="56" y="30" fontSize="20" {...shapeText}>460</text>
    <rect x="106" y="5" width="61" height="39" fill="none" stroke="#111" strokeWidth="2" />
    <path d="M144 16 157 7M154 25 166 13" stroke="#111" strokeWidth="2" />
    <text x="108" y="37" fontSize="18" fill="#e01818" fontFamily="Liberation Serif">80</text>
  </ShapeSvg>
);
const data: { desc: string; d: string; lv: string; fig: string; shape: React.ReactNode; f: React.ReactNode; fd: string; v: string[]; kind: string; white?: boolean; on?: boolean }[] = [
  { desc: "1跨.上通长筋1", d: "14", lv: "虫", fig: "64", shape: <Shape1 />, f: <>240-20+15*d<br />+2760+240-20+15*d</>, fd: "支座宽-保护层+弯折+净长+支座宽-保护层+弯折", v: ["64", "3556", "2", "0", "0", "4.303", "8.606"], kind: "直筋" },
  { desc: "1跨.下部钢筋1", d: "14", lv: "虫", fig: "1", shape: <Shape2 />, f: "12*d+2760+12*d", fd: "锚固+净长+锚固", v: ["(0)", "3096", "2", "0", "0", "3.746", "7.492"], kind: "直筋", white: true, on: true },
  { desc: "1跨.箍筋1", d: "6.5", lv: "中", fig: "195", shape: <Shape3 />, f: <>2*((120-2*20)+(500-2*20))<br />+2*(75+1.9*d)</>, fd: "", v: ["34", "1221", "15", "0", "0", "0.317", "4.755"], kind: "箍筋" },
];

export default function App() {
  return (
    <Page>
      <Global />
      <Header>
        <LogoCell><Logo /></LogoCell>
        <QuickRow>
          <Save size={14} strokeWidth={1.5} /><File size={14} strokeWidth={1.5} /><FolderOpen size={14} strokeWidth={1.5} />
          <Undo2 size={14} strokeWidth={1.5} color="#999" /><MiniCaret />
          <Redo2 size={14} strokeWidth={1.5} color="#999" /><MiniCaret />
          <svg width="14" height="14" viewBox="0 0 14 14"><path d="M11 2H3l4 5-4 5h8" fill="none" stroke={B} strokeWidth="2" /></svg>
          <SmallGrid /><SmallGrid /><SmallGrid />
          <QuickHi>
            <svg width="14" height="16" viewBox="0 0 14 16"><path d="M3 11l7-9 2 1-7 9-3 1z" fill={O} /><path d="M1 14h12" stroke="#777" /></svg>
            <MiniGrid />
          </QuickHi>
          <svg width="13" height="16" viewBox="0 0 13 16"><path d="M1 1h8l3 3v6H1z" fill="#fff" stroke="#777" /><rect x="5" y="8" width="7" height="7" fill={O} /></svg>
          <ToolText $ml={-3}>▾</ToolText>
        </QuickRow>
        <Title>广联达BIM土建计量平台 GTJ2018 - [E:\课外辅导\陈文怀\广联达-算量\倒班楼A\倒班楼A-11G.GTJ]</Title>
        <WinBtns>
          <span>‒</span>
          <svg width="12" height="12" viewBox="0 0 12 12" fill="none" stroke="#444"><rect x="1.500" y="3.500" width="7" height="7" /><path d="M4 3V1.500h6.500V8H9" /></svg>
          <span>✕</span>
        </WinBtns>
        <TabsRow>
          <Tab>开始</Tab><Tab $ml={27}>工程设置</Tab><Tab $ml={26}>建模</Tab><Tab $ml={26}>视图</Tab><Tab $ml={26}>工具</Tab>
          <Tab $on $ml={13}>工程量</Tab><Tab $ml={13}>云应用</Tab>
        </TabsRow>
        <UserRow>
          <svg width="16" height="17" viewBox="0 0 16 17"><rect width="16" height="17" fill="#bcdcf8" /><circle cx="8" cy="6" r="4" fill="#fff" /><path d="M2 17c0-5 3-6 6-6s6 1 6 6z" fill="#fff" /></svg>
          <UserName>Edgar</UserName>
          <UserGlyph $w={23}><Bell size={14} fill="#777" color="#777" /></UserGlyph>
          <UserGlyph $w={23}><MessageCircle size={14} fill="#777" color="#777" /></UserGlyph>
          <UserGlyph $w={18}>?</UserGlyph>
          <UserGlyph $w={26}><Shirt size={14} fill="#777" color="#777" /></UserGlyph>
          <UserGlyph $w={20}><svg width="13" height="14" viewBox="0 0 13 14" fill="none" stroke="#777"><rect x=".5" y=".5" width="12" height="13" /><path d="M1 4h11M6.500 12V6M4 8l2.500-2L9 8" /></svg></UserGlyph>
          <HeadSearch>答疑解惑、搜这里<Search size={12} color="#aaa" /></HeadSearch>
        </UserRow>
      </Header>
      <Badge>61</Badge>
      <Ribbon>
        <RGroup $w={153}>
          <RButtons><RBtn $w={72}><Ribbon1 /><RLabel>汇总计算</RLabel></RBtn><RBtn $w={68}><Ribbon2 /><RLabel>汇总选中图元</RLabel></RBtn></RButtons>
          <RGroupName>汇总</RGroupName>
        </RGroup>
        <RGroup $w={153}>
          <RButtons $pl={6}><RBtn $w={70}><Ribbon3 /><RLabel>查看计算式</RLabel></RBtn><RBtn $w={70}><Ribbon4 /><RLabel>查看工程量</RLabel></RBtn></RButtons>
          <RGroupName>土建计算结果</RGroupName>
        </RGroup>
        <RGroup $w={197}>
          <RButtons $pl={3}>
            <RBtn $w={73}><Ribbon5 /><RLabel>查看钢筋量</RLabel></RBtn>
            <RBtn $w={56} $on><Ribbon6 /><RLabel>编辑钢筋</RLabel></RBtn>
            <RBtn $w={56} $on $ml={2}><Ribbon7 /><RLabel>钢筋三维</RLabel></RBtn>
          </RButtons>
          <RGroupName>钢筋计算结果</RGroupName>
        </RGroup>
        <RGroup $w={83}><RButtons $center><RBtn $w={70}><Ribbon8 /><RLabel>合法性检查</RLabel></RBtn></RButtons><RGroupName>检查</RGroupName></RGroup>
        <RGroup $w={77}><RButtons $center $pr={8}><RBtn $w={56}><Ribbon9 /><RLabel>表格输入</RLabel></RBtn></RButtons><RGroupName>表格输入</RGroupName></RGroup>
        <RGroup $w={58}><RButtons $center><RBtn $w={44}><Ribbon10 /><RLabel>云指标</RLabel></RBtn></RButtons><RGroupName>指标</RGroupName></RGroup>
        <RGroup $w={71}><RButtons $center><RBtn $w={56}><Ribbon11 /><RLabel>查看报表</RLabel></RBtn></RButtons><RGroupName>报表</RGroupName></RGroup>
      </Ribbon>
      <ComboBar>
        <Combo>基础层</Combo><Combo $ml={6}>梁</Combo><Combo $ml={5}>梁</Combo><Combo $ml={5}>L2(1)</Combo><Combo $ml={6}>分层1</Combo>
      </ComboBar>
      <Main>
        <LeftNav>
          <NavHead>
            <svg width="14" height="14" viewBox="0 0 14 14" fill={B}><path d="M9 2l1 2 2 1-2 1-1 2-1-2-2-1 2-1zM4 7l1 2 2 1-2 1-1 2-1-2-2-1 2-1z" /></svg>
            <Spacer />
            <NavHeadBtn><svg width="14" height="14" viewBox="0 0 14 14" fill="none" stroke={B}><path d="M1 2h2M1 7h2M1 12h2M5 2h8M5 7h8M5 12h8" /></svg></NavHeadBtn>
            <NavHeadBtn><svg width="16" height="14" viewBox="0 0 16 14" fill="none" stroke={B}><rect x=".5" y=".5" width="15" height="13" /><path d="M1 4h14M3 7h8M3 10h6" /></svg></NavHeadBtn>
          </NavHead>
          {navRows.map((r, i) => (
            <NavRow key={i} $sub={r.sub} $on={r.on}>
              {r.icon ? <NavIco k={r.icon} on={r.on} /> : <Folder open={r.open} />}
              {r.t}
            </NavRow>
          ))}
        </LeftNav>
        <Col2>
          <ListPanel>
            <Strip>✕</Strip>
            <Tabs2><Tab2 $on>构件列表</Tab2><Tab2>图纸管理</Tab2></Tabs2>
            <ListTools>
              <NewDoc /><ToolText $ml={5}>新建</ToolText><ToolText $ml={8}>▾</ToolText>
              <ToolText $ml={8}><DelDoc /></ToolText><ToolText $ml={4}>删除</ToolText>
              <ToolText $ml={16}><Copy size={14} color={B} /></ToolText><ToolText $ml={5}>复制</ToolText>
              <Spacer /><ToolText $mr={2}>▸▸</ToolText>
            </ListTools>
            <SearchRow>搜索构件...<Search size={13} color={B} /></SearchRow>
            <TreeArea>
              <TreeList>
                <TreeRow $indent={24}><Caret />梁</TreeRow>
                <TreeRow $indent={44}><Caret />楼层框架梁</TreeRow>
                <TreeRow $indent={64}>KL3(1)</TreeRow>
                <TreeRow $indent={64}>KL2(1)</TreeRow>
                <TreeRow $indent={64}>KL1(1)</TreeRow>
                <TreeRow $indent={44}><Caret />非框架梁</TreeRow>
                <TreeRow $indent={64}><TreeSel>L2(1)</TreeSel></TreeRow>
                <TreeRow $indent={64}>TL-1</TreeRow>
                <TreeRow $indent={64}>L3(2)</TreeRow>
              </TreeList>
              <VScroll $h={137} $top={13} />
            </TreeArea>
          </ListPanel>
          <PropPanel>
            <Strip>✕</Strip>
            <Tabs2><Tab2 $on>属性列表</Tab2><Tab2>图层管理</Tab2></Tabs2>
            <PropBody>
              <PropTable>
                <PropHeadRow><PH $blank /><PH>属性名称</PH><PH $on>属性值</PH><PH /></PropHeadRow>
                {propRows.map(r => (
                  <PropRow key={r.n}>
                    <PNum $on={r.sel}>{r.n}</PNum>
                    <PName $blue={r.blue}>{r.plus && <Plus>+</Plus>}{r.name}</PName>
                    <PVal $gray={r.gray} $sel={r.sel}>{r.v}</PVal>
                  </PropRow>
                ))}
              </PropTable>
              <ArrowCol><UpArrow /><VScroll $h={480} $mr={0} /><Spacer /><DownArrow /></ArrowCol>
            </PropBody>
          </PropPanel>
        </Col2>
        <SideHandle $x={416} />
        <Center>
          <Viewport>
            <Scene />
            <CtlPanel>
              <CtlHead>钢筋显示控制面板</CtlHead>
              <CtlBox>
                {["上部通长筋", "下部钢筋", "箍筋", "显示其它图元", "显示详细公式"].map(t => (
                  <CtlRow key={t}><Box $k="c"><Check /></Box>{t}</CtlRow>
                ))}
              </CtlBox>
            </CtlPanel>
            <ViewTools>
              <TI><circle cx="9" cy="13" r="5" /><circle cx="15" cy="9" r="5" /></TI>
              <TI><rect x="1" y="1" width="22" height="20" /><text x="12" y="19" fontSize="7" fill="#444" stroke="none" fontFamily="Liberation Sans">2D</text></TI>
              <TI><rect x="1" y="5" width="17" height="16" fill="rgba(122,168,168,.7)" /><path d="M1 5l5-4h17v16l-5 4M18 5l5-4" /></TI>
              <ToolCaret />
              <TI><rect x="1" y="5" width="17" height="16" /><path d="M1 5l5-4h17v16l-5 4M18 5l5-4" /></TI>
              <ToolCaret />
              <TI><path d="M20 11a9 9 0 1 1-3-7" strokeWidth="2" /><path d="M17 0v5h5" strokeWidth="1.500" /></TI>
              <ToolCaret />
              <ToolRule />
              <TI><rect x="1" y="1" width="22" height="20" /><path d="M1 5h22M5 9h4M5 13h4M5 17h4M14 9h4M14 13h4M14 17h4M12 6v15" /></TI>
            </ViewTools>
            <HHandle />
          </Viewport>
          <BottomPanel>
            <BStrip>✕</BStrip>
            <BTitle>编辑钢筋</BTitle>
            <BBody>
              <BInner>
                <BTools>
                  <Nav $w={20}>|&lt;</Nav><Nav $w={25}>&lt;</Nav><Nav $w={20}>&gt;</Nav><Nav $w={27}>&gt;|</Nav>
                  <IconSlot $ml={9}><UpBox /></IconSlot><IconSlot $ml={6}><UpBox d /></IconSlot>
                  <IconSlot $ml={9}><Ins /></IconSlot>插入
                  <IconSlot $ml={14}><DelDoc /></IconSlot>删除
                  <IconSlot $ml={15}><Scale /></IconSlot>缩尺配筋
                  <IconSlot $ml={16}><FileText size={14} color={B} /></IconSlot>钢筋信息
                  <IconSlot $ml={14}><ImgLib /></IconSlot>钢筋图库
                  <IconSlot $ml={14}><Other /></IconSlot>其他
                  <ToolText $ml={7}>▾</ToolText>
                  <ToolText $ml={10}>单构件钢筋总重(kg): 20.853</ToolText>
                </BTools>
                <GridRow $h={21}>
                  {heads.map((h, i) => i === 8
                    ? <WrapHead key={i}>{h}</WrapHead>
                    : <HeadCell key={i} $on={i === 5}>{h}</HeadCell>)}
                </GridRow>
                {data.map((r, i) => (
                  <GridRow key={i} $h={46} $bg="#ccffd5">
                    <RowNum $on={r.on}>{i + 1}</RowNum>
                    <Cell>{r.desc}</Cell>
                    <Cell $mono>{r.d}</Cell>
                    <Cell>{r.lv}</Cell>
                    <Cell $mono>{r.fig}</Cell>
                    <Cell $white={r.white}>{r.shape}</Cell>
                    <Cell $mono>{r.f}</Cell>
                    <Cell>{r.fd}</Cell>
                    {r.v.map((x, j) => <Cell $mono key={j}>{x}</Cell>)}
                    <Cell>{r.kind}</Cell>
                    <Cell>绑扎</Cell>
                  </GridRow>
                ))}
                <GridRow $h={21}>
                  <RowNum>4</RowNum>
                  {heads.slice(1).map((_, j) => <Cell key={j} />)}
                </GridRow>
                <BRest><HScroll /></BRest>
              </BInner>
            </BBody>
          </BottomPanel>
        </Center>
        <SideHandle $x={1649} />
        <RightWrap>
          <Strip>✕</Strip>
          <RTitle>显示设置</RTitle>
          <RTabs><RTab $on>图元显示</RTab><RTab>楼层显示</RTab></RTabs>
          <RTableWrap>
            <RTable>
              <RGridRow $h={20}><RHead>图层构件</RHead><RHead>显示图元</RHead><RHead>显示名称</RHead></RGridRow>
              {rightRows.map(([t, lv, a, b, last], i) => (
                <RGridRow key={i} $h={21}>
                  <RName $lv={lv}>
                    {lv > 0 && <GuideV $x={8} />}
                    {lv === 0 && <GuideV $x={8} $top={11} $h={10} />}
                    {lv === 1 && <GuideH $x={8} $w={4} />}
                    {lv === 2 && <GuideV $x={18} $h={last ? 11 : 21} />}
                    {lv === 2 && <GuideH $x={18} $w={17} />}
                    {lv === 1 && <GuideV $x={18} $top={11} $h={10} />}
                    {lv < 2 && <Minus $lv={lv} />}
                    {t}
                  </RName>
                  <RCheck><Box $k={a}>{a === "c" && <Check />}</Box></RCheck>
                  <RCheck><Box $k={b} /></RCheck>
                </RGridRow>
              ))}
            </RTable>
            <RScroll><UpArrow /><VScroll $h={243} $mr={0} /><Spacer /><DownArrow /></RScroll>
          </RTableWrap>
          <RFoot><ResetBtn>恢复默认设置</ResetBtn></RFoot>
        </RightWrap>
      </Main>
      <Status>
        <SText $big>X = 12930 Y = -5090 Z = 8638</SText>
        <SText $ml={33}>层高：1.44</SText>
        <SText $ml={20}>标高：-1.5~-0.06</SText>
        <SText $ml={42}>1(8)</SText>
        <SText $ml={82}>隐藏：  0</SText>
        <SBtn $w={26} $ml={35}><svg width="14" height="14" viewBox="0 0 14 14" fill="none" stroke="#333"><path d="M2 1v11h11M2 8h5v4" /></svg></SBtn>
        <SBtn $w={36} $on><svg width="14" height="18" viewBox="0 0 14 18" fill="none" stroke={B}><rect x="2" y="3" width="10" height="14" /><rect x="0" y="0" width="5" height="5" fill={O} stroke="none" /></svg><SCaret /></SBtn>
        <SBtn $w={26}><svg width="16" height="16" viewBox="0 0 16 16" stroke="#888"><path d="M2 1l12 14M14 1 2 15" /></svg></SBtn>
        <SBtn $w={36}><svg width="14" height="14" viewBox="0 0 14 14" fill="none" stroke="#333"><path d="M1 13h12M1 13 9 3" /></svg><SCaret /></SBtn>
        <SBtn $w={37}><svg width="16" height="14" viewBox="0 0 16 14"><path d="M3 1v6M0 4h6" stroke="#333" /><rect x="6" y="8" width="9" height="5" fill="#333" /></svg><SCaret /></SBtn>
        <SBtn $w={73}>跨图层选择</SBtn>
        <SBtn $w={62}>折线选择</SBtn>
        <SText $ml={3}>请选择图元</SText>
        <Spacer />
        <SText>1000 FPS</SText>
        <SText $ml={33} />
      </Status>
      <TaskBar><TaskMark /><Clock>16:01</Clock></TaskBar>
    </Page>
  );
}
